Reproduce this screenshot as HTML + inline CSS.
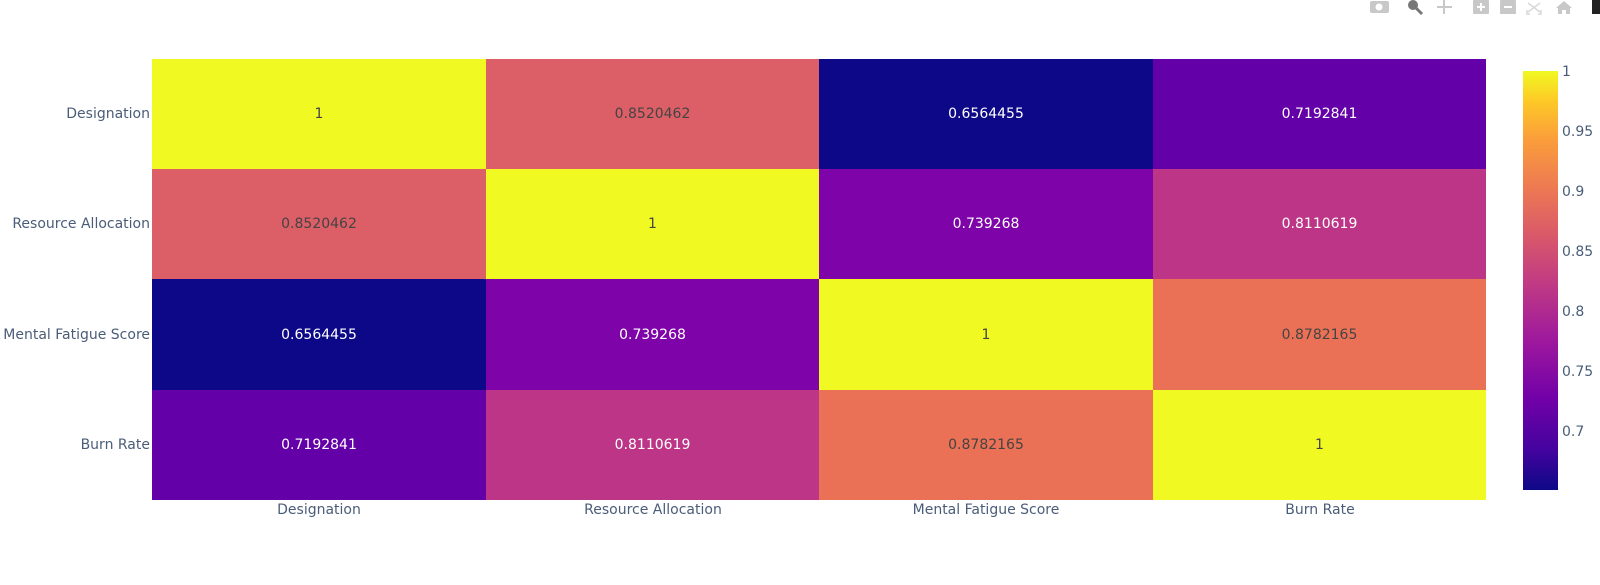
<!DOCTYPE html>
<html><head><meta charset="utf-8"><style>
body{margin:0;width:1600px;height:585px;background:#fff;font-family:"DejaVu Sans","Liberation Sans",sans-serif;position:relative;overflow:hidden}
.c{position:absolute;display:flex;align-items:center;justify-content:center;font-size:14px}
.d{color:#444}.w{color:#fff}
.yl{position:absolute;right:1450px;font-size:14px;color:#4a5d78;white-space:nowrap;line-height:16px}
.xl{position:absolute;top:502px;font-size:14px;color:#4a5d78;width:334px;text-align:center;line-height:16px}
.t{position:absolute;left:1562px;font-size:14px;color:#4a5d78;line-height:16px}
</style></head><body>
<div class="c d" style="left:152px;top:59px;width:334px;height:110px;background:#f0f921">1</div>
<div class="c d" style="left:486px;top:59px;width:333px;height:110px;background:#dc5e66">0.8520462</div>
<div class="c w" style="left:819px;top:59px;width:334px;height:110px;background:#0d0887">0.6564455</div>
<div class="c w" style="left:1153px;top:59px;width:333px;height:110px;background:#6300a7">0.7192841</div>

<div class="c d" style="left:152px;top:169px;width:334px;height:110px;background:#dc5e66">0.8520462</div>
<div class="c d" style="left:486px;top:169px;width:333px;height:110px;background:#f0f921">1</div>
<div class="c w" style="left:819px;top:169px;width:334px;height:110px;background:#7e03a8">0.739268</div>
<div class="c w" style="left:1153px;top:169px;width:333px;height:110px;background:#bc3587">0.8110619</div>

<div class="c w" style="left:152px;top:279px;width:334px;height:111px;background:#0d0887">0.6564455</div>
<div class="c w" style="left:486px;top:279px;width:333px;height:111px;background:#7e03a8">0.739268</div>
<div class="c d" style="left:819px;top:279px;width:334px;height:111px;background:#f0f921">1</div>
<div class="c d" style="left:1153px;top:279px;width:333px;height:111px;background:#ea7155">0.8782165</div>

<div class="c w" style="left:152px;top:390px;width:334px;height:110px;background:#6300a7">0.7192841</div>
<div class="c w" style="left:486px;top:390px;width:333px;height:110px;background:#bc3587">0.8110619</div>
<div class="c d" style="left:819px;top:390px;width:334px;height:110px;background:#ea7155">0.8782165</div>
<div class="c d" style="left:1153px;top:390px;width:333px;height:110px;background:#f0f921">1</div>

<div class="yl" style="top:106px">Designation</div>
<div class="yl" style="top:216px">Resource Allocation</div>
<div class="yl" style="top:327px">Mental Fatigue Score</div>
<div class="yl" style="top:437px">Burn Rate</div>

<div class="xl" style="left:152px">Designation</div>
<div class="xl" style="left:486px">Resource Allocation</div>
<div class="xl" style="left:819px">Mental Fatigue Score</div>
<div class="xl" style="left:1153px">Burn Rate</div>

<div style="position:absolute;left:1523px;top:71px;width:35px;height:419px;background:linear-gradient(to top,#0d0887 0%,#46039f 10%,#7201a8 22%,#9c179e 35%,#bd3786 48%,#d8576b 60%,#ed7953 72%,#fb9f3a 84%,#fdca26 93%,#f0f921 100%)"></div>
<div class="t" style="top:64px">1</div>
<div class="t" style="top:124px">0.95</div>
<div class="t" style="top:184px">0.9</div>
<div class="t" style="top:244px">0.85</div>
<div class="t" style="top:304px">0.8</div>
<div class="t" style="top:364px">0.75</div>
<div class="t" style="top:424px">0.7</div>

<svg style="position:absolute;left:1360px;top:0" width="240" height="16" viewBox="0 0 240 16">
<rect x="10" y="1" width="19" height="12" rx="2" fill="#c8c8c8"/><circle cx="19" cy="7" r="3.5" fill="#fff"/>
<circle cx="53" cy="5" r="5" fill="#777"/><path d="M56 8l6 6" stroke="#777" stroke-width="3"/>
<path d="M84 0v14M77 7h15" stroke="#c8c8c8" stroke-width="2"/>
<rect x="113" y="0" width="16" height="14" rx="1" fill="#c8c8c8"/><path d="M121 3v8M117 7h8" stroke="#fff" stroke-width="2"/>
<rect x="140" y="0" width="16" height="14" rx="1" fill="#c8c8c8"/><path d="M144 7h8" stroke="#fff" stroke-width="2"/>
<path d="M168 3l12 9M180 3l-12 9M167 10v4h3M181 10v4h-3" stroke="#d8d8d8" stroke-width="1.5" fill="none"/>
<path d="M196 8l8-7 8 7h-2v6h-4v-4h-4v4h-4v-6z" fill="#c8c8c8"/>
<rect x="232" y="0" width="8" height="14" fill="#222"/>
</svg>
</body></html>
